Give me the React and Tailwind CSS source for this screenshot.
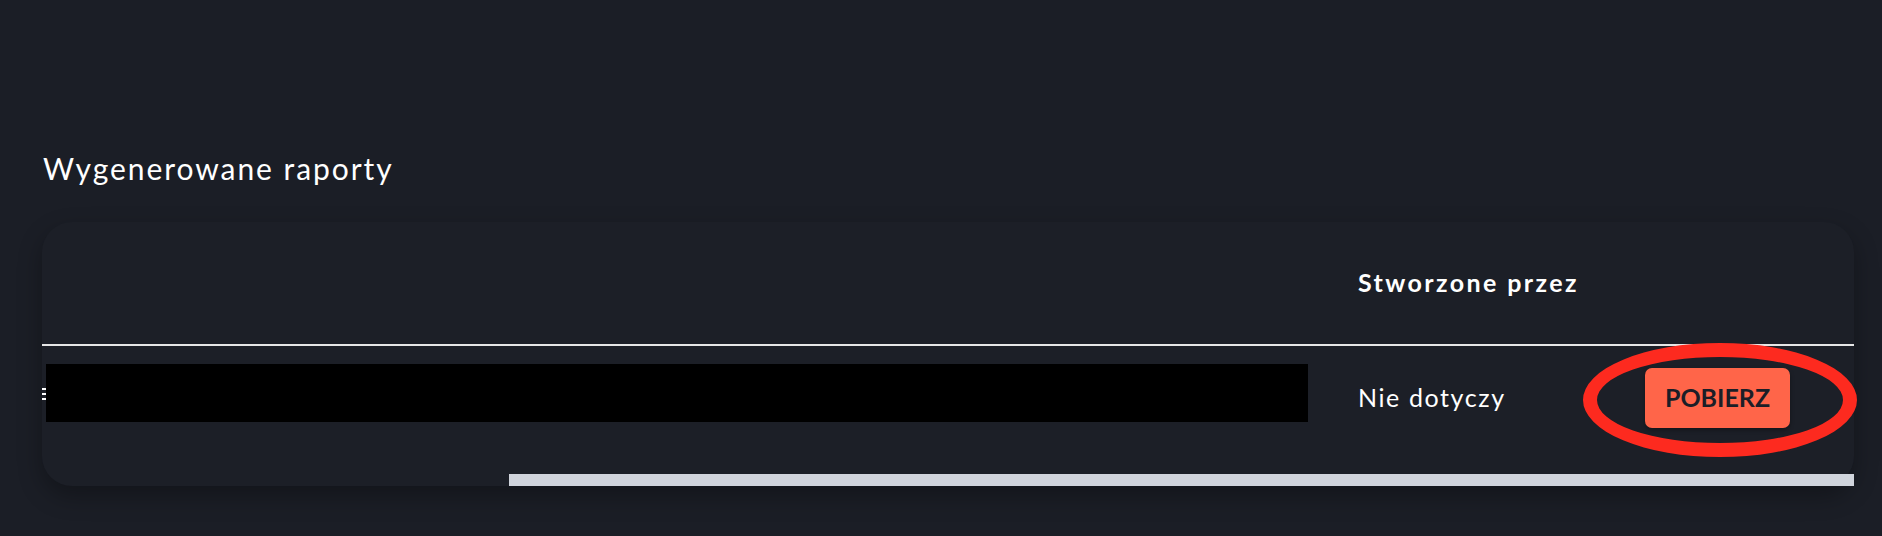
import React from 'react';

const font = { fontFamily: 'Lato, "Noto Sans", sans-serif' };

const Oval = () => (
  // red marker ring drawn over the download button
  <div className="pointer-events-none absolute left-[-62px] top-[-25px] h-[114px] w-[274px] rounded-[50%] border-[14px] border-[#fd2a1f]" />
);

const ReportRow = () => (
  <div className="grid h-[102px] grid-cols-[1316px_287px_209px]">
    <div className="flex items-start pt-[18px]">
      <div className="flex h-[58px] items-center">
        <div className="flex w-[4px] flex-col gap-[3px] pt-[2px]">
          <span className="block h-[2px] w-[4px] bg-white" />
          <span className="block h-[2px] w-[4px] bg-white" />
          <span className="block h-[2px] w-[4px] bg-white" />
        </div>
        <div className="h-[58px] w-[1262px] bg-black" />
      </div>
    </div>
    <div className="flex items-center pt-[2px] text-[25px] tracking-[1.6px] text-white">Nie dotyczy</div>
    <div className="flex items-start pt-[22px]">
      <div className="relative">
        <button className="flex h-[60px] w-[145px] items-center justify-center rounded-[7px] bg-[#ff6549] text-[25px] font-bold text-[#1b1e27] shadow-[0_2px_4px_rgba(0,0,0,0.35)]">
          POBIERZ
        </button>
        <Oval />
      </div>
    </div>
  </div>
);

export default function App() {
  return (
    <div style={font} className="min-h-[536px] w-full bg-[#1b1e26] pt-[150px] pl-[42px] pr-[28px]">
      <h2 className="pl-px text-[30px] leading-[36px] tracking-[1.95px] text-white">Wygenerowane raporty</h2>
      <div className="mt-[36px] h-[264px] rounded-[30px] bg-[#1c1f27] shadow-[0_10px_24px_rgba(0,0,0,0.3)]">
        <div className="grid h-[122px] grid-cols-[1316px_287px_209px] items-center">
          <div />
          <div className="text-[25px] font-bold tracking-[2.4px] text-white">Stworzone przez</div>
          <div />
        </div>
        <div className="h-[2px] bg-[#e6e6e6]" />
        <ReportRow />
        <div className="mt-[26px] flex h-[12px]">
          <div className="ml-[467px] flex-1 bg-[#d0d4dc]" />
        </div>
      </div>
    </div>
  );
}
